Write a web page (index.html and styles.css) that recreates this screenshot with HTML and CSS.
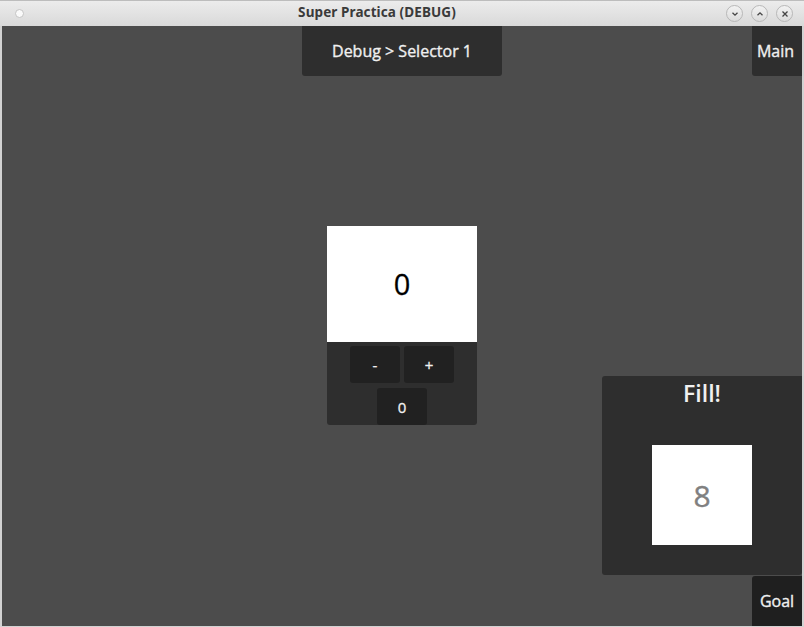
FILE: index.html
```html
<!DOCTYPE html>
<html>
<head>
<meta charset="utf-8">
<link rel="stylesheet" href="styles.css">
</head>
<body>
<div class="window">
  <div class="titlebar">
    <span class="tb-dot"></span>
    <span class="tb-title">Super Practica (DEBUG)</span>
    <div class="tb-buttons">
      <span class="tb-btn"><svg width="8" height="8" viewBox="0 0 8 8"><path d="M1.5 2.8 L4 5.2 L6.5 2.8" fill="none" stroke="#444" stroke-width="1.3"/></svg></span>
      <span class="tb-btn"><svg width="8" height="8" viewBox="0 0 8 8"><path d="M1.5 5.2 L4 2.8 L6.5 5.2" fill="none" stroke="#444" stroke-width="1.3"/></svg></span>
      <span class="tb-btn"><svg width="8" height="8" viewBox="0 0 8 8"><path d="M1.5 1.5 L6.5 6.5 M6.5 1.5 L1.5 6.5" fill="none" stroke="#444" stroke-width="1.3"/></svg></span>
    </div>
  </div>
  <div class="scene">
    <div class="crumb">Debug &gt; Selector 1</div>
    <div class="main-btn">Main</div>
    <div class="selector">
      <div class="sel-display">0</div>
      <div class="sel-controls">
        <div class="sel-row">
          <div class="sel-btn">-</div>
          <div class="sel-btn">+</div>
        </div>
        <div class="sel-row">
          <div class="sel-btn">0</div>
        </div>
      </div>
    </div>
    <div class="fill-panel">
      <div class="fill-title">Fill!</div>
      <div class="fill-box">8</div>
    </div>
    <div class="goal-btn">Goal</div>
  </div>
</div>
</body>
</html>
```
FILE: styles.css
```css
html, body {
  margin: 0;
  padding: 0;
  background: #cfcfcf;
}
.window {
  width: 804px;
  height: 627px;
  box-sizing: border-box;
  border-left: 2px solid #d2d2d2;
  border-right: 2px solid #d2d2d2;
  border-bottom: 1px solid #d2d2d2;
  display: flex;
  flex-direction: column;
  font-family: "Open Sans", "Noto Sans", sans-serif;
}
.titlebar {
  height: 26px;
  margin: 0 -2px;
  background: linear-gradient(#ececec, #d9d9d9);
  display: flex;
  align-items: center;
  position: relative;
  border-top: 1px solid #bdbdbd;
  box-sizing: border-box;
}
.tb-dot {
  width: 7px;
  height: 7px;
  border-radius: 50%;
  background: #fafafa;
  border: 1px solid #c4c4c4;
  margin-left: 15px;
}
.tb-title {
  position: absolute;
  left: 0;
  right: 50px;
  text-align: center;
  font-family: "Noto Sans", "DejaVu Sans", sans-serif;
  font-weight: bold;
  font-size: 13.5px;
  color: #3a3a3a;
  top: 2px;
  letter-spacing: 0.1px;
}
.tb-buttons {
  margin-left: auto;
  margin-right: 11px;
  display: flex;
  gap: 8px;
}
.tb-btn {
  width: 15px;
  height: 15px;
  border-radius: 50%;
  border: 1px solid #b8b8b8;
  background: linear-gradient(#f2f2f2, #dcdcdc);
  display: flex;
  align-items: center;
  justify-content: center;
}
.scene {
  width: 800px;
  height: 600px;
  background: #4c4c4c;
  display: grid;
  grid-template-columns: 300px 25px 150px 25px 100px 150px 50px;
  grid-template-rows: 50px 150px 150px 50px 150px 50px;
  color: #f0f0f0;
}
.crumb {
  grid-column: 2 / 5;
  grid-row: 1;
  background: #2e2e2e;
  border-radius: 0 0 3px 3px;
  display: flex;
  align-items: center;
  justify-content: center;
  font-size: 16px;
  -webkit-text-stroke: 0.35px #f0f0f0;
}
.main-btn {
  grid-column: 7;
  grid-row: 1;
  background: #2e2e2e;
  border-radius: 0 0 0 3px;
  display: flex;
  align-items: center;
  justify-content: center;
  font-size: 16px;
  -webkit-text-stroke: 0.35px #f0f0f0;
  padding-right: 3px;
}
.selector {
  grid-column: 3;
  grid-row: 3 / 5;
  display: flex;
  flex-direction: column;
  height: 199px;
}
.sel-display {
  height: 116px;
  background: #ffffff;
  color: #000;
  font-size: 29px;
  display: flex;
  align-items: center;
  justify-content: center;
  padding-bottom: 2px;
  box-sizing: border-box;
  -webkit-text-stroke: 0.3px #000;
}
.sel-controls {
  flex: 1;
  background: #2e2e2e;
  border-radius: 0 0 3px 3px;
  display: flex;
  flex-direction: column;
  align-items: center;
  padding-top: 4px;
  gap: 5px;
}
.sel-row {
  display: flex;
  gap: 4px;
}
.sel-btn {
  width: 50px;
  height: 37px;
  background: #212121;
  border-radius: 3px;
  display: flex;
  align-items: center;
  justify-content: center;
  font-size: 15px;
  -webkit-text-stroke: 0.3px #f0f0f0;
}
.fill-panel {
  grid-column: 6 / 8;
  grid-row: 4 / 6;
  height: 199px;
  background: #2e2e2e;
  border-radius: 3px 0 3px 3px;
  display: flex;
  flex-direction: column;
  align-items: center;
}
.fill-title {
  font-size: 23px;
  line-height: 32px;
  margin-top: 1px;
  font-weight: 600;
}
.fill-box {
  margin-top: 36px;
  width: 100px;
  height: 100px;
  background: #ffffff;
  color: #808080;
  font-size: 30px;
  display: flex;
  align-items: center;
  justify-content: center;
  -webkit-text-stroke: 0.4px #808080;
}
.goal-btn {
  grid-column: 7;
  grid-row: 6;
  background: #1f1f1f;
  border-radius: 3px 0 0 0;
  display: flex;
  align-items: center;
  justify-content: center;
  font-size: 16px;
  -webkit-text-stroke: 0.35px #f0f0f0;
}
```
